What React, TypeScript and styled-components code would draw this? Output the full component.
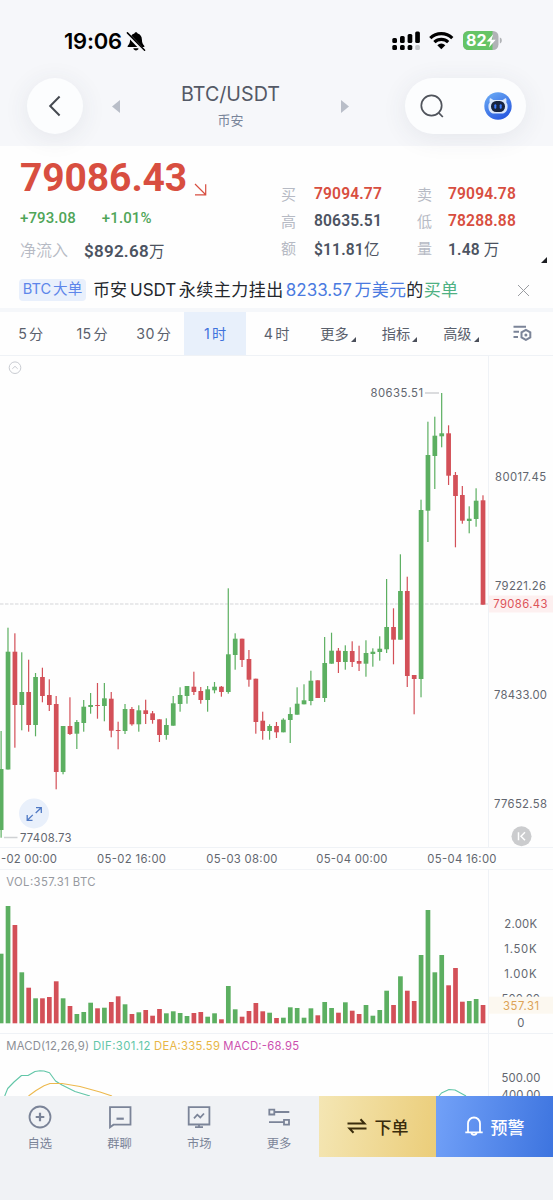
import React from "react";
import styled, { createGlobalStyle } from "styled-components";

const Global = createGlobalStyle`
  *, *::before, *::after { box-sizing: border-box; }
  body { margin: 0; background: #fff; font-family: Inter, "Noto Sans CJK SC", sans-serif; }
  svg { display: block; }
`;

const GREEN = "#5caf61";
const RED = "#d35058";
const LINE = "#eff2f6";

const Screen = styled.div`
  width: 553px;
  height: 1200px;
  overflow: hidden;
  display: flex;
  flex-direction: column;
  background: #fefefe;
`;

const Top = styled.div`
  height: 146px;
  flex: none;
  background: #f6f7fa;
`;

const StatusBar = styled.div`
  height: 78px;
  padding: 30px 51px 0 64px;
  display: flex;
  justify-content: space-between;
  align-items: flex-start;
`;

const Clock = styled.div`
  display: flex;
  gap: 4px;
  font-size: 22px;
  line-height: 22px;
  font-weight: 600;
  letter-spacing: -0.25px;
  color: #000;
`;

const Header = styled.div`
  height: 56px;
  padding: 0 27px;
  display: flex;
  align-items: center;
`;

const Round = styled.div<{ $w: number }>`
  width: ${(p) => p.$w}px;
  height: 56px;
  flex: none;
  border-radius: 28px;
  background: #fcfdfe;
  box-shadow: 0 4px 26px rgba(60, 70, 90, 0.09);
  display: flex;
  align-items: center;
  justify-content: ${(p) => (p.$w > 56 ? "space-between" : "center")};
  padding: ${(p) => (p.$w > 56 ? "0 14px 0 15px" : "0")};
`;

const Pair = styled.div`
  flex: 1;
  padding: 0 56px 0 29px;
  display: flex;
  align-items: center;
  justify-content: space-between;
`;

const PairName = styled.div`
  display: flex;
  flex-direction: column;
  align-items: center;
  font-size: 19.7px;
  line-height: 24px;
  color: #545966;
  small {
    font-size: 13px;
    line-height: 20px;
    margin-top: 4px;
    color: #79859a;
  }
`;

const Quote = styled.div`
  height: 128px;
  flex: none;
  padding: 0 6px 0 20px;
  display: flex;
  font-family: Roboto, "Noto Sans CJK SC", sans-serif;
`;

const QuoteMain = styled.div`
  width: 261px;
  flex: none;
`;

const Price = styled.div`
  display: flex;
  gap: 7px;
  padding-top: 13px;
  height: 60px;
  font-size: 39px;
  line-height: 39px;
  font-weight: 700;
  letter-spacing: -0.1px;
  color: #d84e40;
  svg { margin-top: 24px; }
`;

const Change = styled.div`
  display: flex;
  gap: 26px;
  height: 24px;
  line-height: 24px;
  font-size: 15px;
  color: #4fa558;
  b { font-weight: 500; letter-spacing: 0.1px; }
`;

const Inflow = styled.div`
  display: flex;
  gap: 16px;
  height: 40px;
  line-height: 40px;
  font-size: 17px;
  font-weight: 600;
  letter-spacing: 0.25px;
  padding-top: 1px;
  color: #4c5361;
  span { font-size: 16px; font-weight: 350; letter-spacing: 0; color: #b6bac4; }
`;

const Cjk = styled.i`
  font-style: normal;
  font-weight: 400;
  font-size: 15.5px;
`;

const Stats = styled.div`
  width: 236px;
  padding-top: 34px;
  display: grid;
  grid-template-columns: 33px 103px 31px 1fr;
  grid-auto-rows: 27px;
  align-items: center;
`;

const StatLabel = styled.span`
  font-size: 15px;
  color: #b6bac4;
`;

const StatValue = styled.span<{ $red?: boolean }>`
  font-size: 15.6px;
  font-weight: 600;
  letter-spacing: 0.15px;
  white-space: nowrap;
  color: ${(p) => (p.$red ? "#d84e40" : "#4c5361")};
`;

const Corner = styled.div`
  flex: 1;
  display: flex;
  align-items: flex-end;
  justify-content: flex-end;
  padding-bottom: 11px;
`;

const Notice = styled.div`
  height: 34px;
  flex: none;
  padding: 0 23px 2px 19px;
  display: flex;
  align-items: center;
`;

const Tag = styled.div`
  width: 67px;
  height: 22px;
  border-radius: 4px;
  background: #e9f0fc;
  color: #5d86ea;
  font-size: 14.6px;
  line-height: 21px;
  display: flex;
  justify-content: center;
  gap: 2px;
`;

const NoticeText = styled.div`
  flex: 1;
  margin-left: 7px;
  display: flex;
  font-size: 17px;
  line-height: 22px;
  color: #24272d;
  white-space: nowrap;
`;

const Piece = styled.span<{ $ml?: number; $c?: string; $ls?: number }>`
  margin-left: ${(p) => p.$ml ?? 0}px;
  color: ${(p) => p.$c ?? "inherit"};
  letter-spacing: ${(p) => p.$ls ?? 0}px;
`;

const Divider = styled.div`
  height: 4px;
  flex: none;
  background: #f5f7fa;
`;

const Tabs = styled.div`
  height: 43px;
  flex: none;
  display: grid;
  grid-template-columns: repeat(9, 1fr);
`;

const Tab = styled.div<{ $on?: boolean }>`
  display: flex;
  align-items: center;
  justify-content: center;
  gap: 2px;
  padding-bottom: 1px;
  font-size: 14.2px;
  color: ${(p) => (p.$on ? "#3f72dc" : "#5a606c")};
  background: ${(p) => (p.$on ? "#e8f0fb" : "transparent")};
  span { letter-spacing: 0.3px; }
  svg.more { margin-top: 12px; }
`;

const Plot = styled.svg`
  flex: none;
  font-family: Inter, sans-serif;
`;

const Bottom = styled.div`
  height: 104px;
  flex: none;
  background: #f0f2f5;
  display: flex;
  align-items: flex-start;
`;

const NavItem = styled.div`
  width: 79.75px;
  height: 61px;
  display: flex;
  flex-direction: column;
  align-items: center;
  padding-top: 9px;
  font-size: 12.3px;
  line-height: 18px;
  color: #7b8498;
  svg { margin-bottom: 6px; }
`;

const Action = styled.div<{ $blue?: boolean }>`
  width: 117px;
  height: 61px;
  display: flex;
  align-items: center;
  justify-content: center;
  padding-bottom: 1px;
  gap: 8px;
  font-size: 17px;
  font-weight: 500;
  color: ${(p) => (p.$blue ? "#fff" : "#3a2c0c")};
  background: ${(p) =>
    p.$blue
      ? "linear-gradient(100deg, #72a1f8, #3d74df)"
      : "linear-gradient(100deg, #f4e6b4, #ebcd79)"};
`;

/* up/down, high, body top, body bottom, low, volume top */
type Bar = [0 | 1, number, number, number, number, number];
const bars: Bar[] = [
  [1, 731, 769, 830, 837.7, 953.7], [1, 627.7, 651.7, 769.5, 769.5, 906],
  [0, 633.3, 651.7, 705, 747.7, 925], [1, 652.3, 692, 705, 730.3, 972.3],
  [0, 659.7, 692, 725, 731.7, 987.7], [1, 673, 677, 725, 736.3, 998.3],
  [0, 667.7, 677, 696, 702.3, 998.3], [0, 679.3, 695, 705, 711, 997],
  [0, 696, 704, 772, 789.3, 981.3], [1, 726, 726, 772, 774.3, 998.3],
  [0, 697.3, 726, 734, 735, 1006], [1, 720, 722, 733.7, 749, 1014],
  [1, 700, 706.7, 723, 731.7, 1012], [1, 693, 705, 707, 713.7, 1002.7],
  [0, 683, 705, 706, 718.7, 1008.3], [1, 683, 698.3, 706, 721.3, 1007.7],
  [0, 692, 698.7, 730.7, 737.3, 1002], [0, 721.7, 730, 731, 749.3, 996.3],
  [1, 704, 709, 731, 734, 1004.3], [0, 707, 709, 724.3, 725.7, 1014],
  [1, 705.3, 710.3, 724.3, 731.7, 1012.3], [0, 699.7, 710.3, 714, 724, 1010],
  [0, 711, 713.3, 720, 723.7, 1015.7], [0, 719.3, 719.3, 735, 742, 1009],
  [1, 718.3, 725, 735, 739.7, 1013.3], [1, 696, 703.3, 725.7, 725.7, 1011.3],
  [1, 687.3, 695, 704, 711.7, 1013], [1, 686, 686, 696, 703.7, 1016],
  [0, 671.7, 686.7, 692, 695, 1013], [0, 687, 691, 700, 703.7, 1012],
  [1, 686, 689.3, 700, 711.7, 1016.7], [1, 682, 686.7, 690.3, 693.3, 1013.3],
  [0, 686, 686.7, 692, 696.7, 1019.3], [1, 588.3, 654.3, 692, 693.7, 986],
  [1, 633.3, 638.7, 655, 669.7, 1009.3], [0, 638.7, 638.7, 660, 667, 1016.7],
  [0, 650, 659, 679.7, 686.7, 1011], [0, 678.7, 678.7, 722, 733.7, 1003],
  [0, 711.7, 720.7, 731, 739.7, 1011.3], [1, 724.3, 726, 731, 739.7, 1012.7],
  [0, 722, 726, 732.3, 738, 1018], [1, 718.3, 719.7, 732.3, 732.3, 1017.7],
  [1, 707.3, 714, 720, 743, 1007.3], [1, 687.3, 703.7, 714.7, 714.7, 1008],
  [1, 684.3, 700.3, 704.3, 704.3, 1017.7], [1, 670.7, 680.7, 701, 705.3, 1008.3],
  [0, 680.3, 680.3, 698, 698, 1015.3], [1, 637, 663, 698, 702, 1002],
  [1, 632.7, 650.7, 663.7, 663.7, 1008], [0, 648, 650.7, 662, 673, 1012.7],
  [1, 645.3, 651, 662, 669.7, 1002.3], [0, 641.3, 651, 662, 667, 1010.7],
  [0, 645.7, 661, 663.7, 671, 1014], [1, 640.3, 653, 663.7, 676.7, 1005],
  [1, 648.3, 651.7, 654, 666.7, 1015.7], [1, 636.3, 648.7, 652, 660.7, 1010],
  [1, 579, 627, 649.3, 653, 990.7], [0, 608.3, 627, 639.7, 664.3, 1005],
  [1, 554.3, 591, 639.7, 639.7, 976.3], [0, 576.7, 591, 676, 687, 990.7],
  [0, 675, 675, 679, 714.3, 1001], [1, 499.7, 510, 679, 697.3, 955],
  [1, 421.7, 455, 510.7, 542, 910], [1, 416.7, 435.7, 456, 489, 972.3],
  [1, 393, 433.3, 436.3, 447.3, 955], [0, 425.3, 433.3, 475.7, 485, 985.3],
  [0, 472, 475, 496, 547.3, 968], [0, 486, 495, 520.7, 523.7, 1001.7],
  [1, 506.3, 518.7, 521, 533.3, 1001], [1, 488.3, 500.7, 519, 526.7, 999],
  [0, 495.3, 500.3, 604.7, 604.7, 1005],
];
const barX = (i: number) => 1.1 + i * 6.884;

/* A chart label whose glyphs are spread to span x1..x2. */
function Label({ x1, x2, y, c = "#62666f", s = 11.3, children }: {
  x1: number; x2: number; y: number; c?: string; s?: number; children: string;
}) {
  return (
    <text x={x1} y={y} fill={c} fontSize={s} textLength={x2 - x1}>
      {children}
    </text>
  );
}

const Tri = ({ s = 5, c = "#4a4f5a" }: { s?: number; c?: string }) => (
  <svg className="more" width={s} height={s} viewBox="0 0 5 5">
    <path d="M5 0V5H0Z" fill={c} />
  </svg>
);

function Status() {
  return (
    <StatusBar>
      <Clock>
        19:06
        <svg width="20" height="22" viewBox="0 0 20 22">
          <path d="M10 2.2c.9 0 1.5.6 1.6 1.4 2.8.7 4.2 3 4.3 5.9.1 3.3.8 4.7 2.3 6.2.5.6.2 1.4-.6 1.4H2.4c-.8 0-1.1-.8-.6-1.4 1.500-1.500 2.200-2.900 2.300-6.200.1-2.900 1.500-5.200 4.300-5.900.1-.8.7-1.400 1.600-1.400z" fill="#000" />
          <path d="M7.300 18.300h5.400c-.3 1.300-1.400 2.200-2.700 2.200s-2.400-.9-2.700-2.200z" fill="#000" />
          <path d="M1 3.800 17.400 20.800" stroke="#f6f7fa" strokeWidth="3.600" />
          <path d="M1.400 2.900 18.600 20.200" stroke="#000" strokeWidth="1.500" strokeLinecap="round" />
        </svg>
      </Clock>
      <svg width="111" height="22" viewBox="391 30 111 22">
        {[[392.3, 38], [400, 36], [407.6, 34], [415.2, 31.5]].map(([x, y], i) => (
          <g key={x}>
            <rect x={x} y={y} width="4.700" height={43 - y} rx="1.500" />
            <rect x={x} y="45" width="4.700" height="5" rx="1.500" fill={i === 3 ? "#c4c6c9" : "#000"} />
          </g>
        ))}
        <g fill="none" stroke="#000" strokeWidth="3.200">
          <path d="M430.300 38.200a15.700 15.700 0 0 1 22 0" />
          <path d="M434.400 42.200a10 10 0 0 1 13.800 0" />
        </g>
        <path d="M441.300 49.200 437.300 45.200a5.700 5.700 0 0 1 8 0z" />
        <clipPath id="cell"><rect x="463" y="31" width="35.500" height="19" rx="5.500" /></clipPath>
        <g clipPath="url(#cell)">
          <rect x="463" y="31" width="36" height="19" fill="#b1b3b6" />
          <rect x="463" y="31" width="29.500" height="19" fill="#66c466" />
        </g>
        <path d="M499.800 37.500c1.500.4 2 1.600 2 3s-.5 2.600-2 3z" fill="#b1b3b6" />
        <text x="466" y="46.300" fontSize="16" fontWeight="700" fill="#fff" fontFamily="Inter" textLength="20.500" lengthAdjust="spacingAndGlyphs">82</text>
        <path d="M493.200 34.200 486.600 41.600h4l-1.700 5.800 6.800-7.700h-4.100z" fill="#fff" />
      </svg>
    </StatusBar>
  );
}

function Head() {
  return (
    <Header>
      <Round $w={56}>
        <svg width="14" height="22" viewBox="0 0 14 22" fill="none" stroke="#454950" strokeWidth="2">
          <path d="M11.600 1.500 2.200 11l9.400 9.500" />
        </svg>
      </Round>
      <Pair>
        <svg width="8" height="13" viewBox="0 0 8 13"><path d="M8 0v13L0 6.500z" fill="#b9bec8" /></svg>
        <PairName>
          BTC/USDT<small>币安</small>
        </PairName>
        <svg width="8" height="13" viewBox="0 0 8 13"><path d="M0 0v13l8-6.500z" fill="#b9bec8" /></svg>
      </Pair>
      <Round $w={121}>
        <svg width="24" height="24" viewBox="0 0 24 24" fill="none" stroke="#50545c" strokeWidth="1.700">
          <circle cx="11.500" cy="11.500" r="10.200" />
          <path d="m18.800 18.800 4 4.200" />
        </svg>
        <svg width="28" height="28" viewBox="0 0 28 28">
          <defs>
            <linearGradient id="bot" x1="0" y1="0" x2=".6" y2="1">
              <stop offset="0" stopColor="#6fb0f6" />
              <stop offset="1" stopColor="#2a5be0" />
            </linearGradient>
          </defs>
          <circle cx="14" cy="14" r="13.700" fill="url(#bot)" />
          <path d="M5.600 7.200c0-1 .8-1.200 1.500-.7l2.200 1.400h9.400l2.200-1.400c.7-.5 1.500-.3 1.500.7v3.500c.9 1 1.200 2.100 1.200 3.700 0 4.600-2.500 7-6 7.200h-7.200c-3.500-.2-6-2.600-6-7.200 0-1.600.3-2.700 1.200-3.700z" fill="#dce8fa" />
          <rect x="7" y="9" width="14" height="11" rx="5.200" fill="#18243f" />
          <rect x="10.300" y="12.200" width="2" height="4.600" rx="1" fill="#3d7cff" />
          <rect x="15.700" y="12.200" width="2" height="4.600" rx="1" fill="#3d7cff" />
        </svg>
      </Round>
    </Header>
  );
}

function PricePane() {
  return (
    <Plot width="553" height="493" viewBox="0 355 553 493">
      <path d="M0 355.500H553M0 847.500H553M488.500 355V848" stroke={LINE} />
      <g fill="none" stroke="#c9ccd2">
        <circle cx="15" cy="367.700" r="5.800" />
        <path d="m12.300 368.800 2.700-2.500 2.700 2.500" />
      </g>
      <path d="M0 604H488" stroke="#d4d5d8" strokeDasharray="3.500 1.500" />
      {bars.map(([up, hi, top, bot, lo], i) => (
        <g key={i} fill={up ? GREEN : RED}>
          <rect x={barX(i) - 0.6} y={hi} width="1.200" height={lo - hi} />
          <rect x={barX(i) - 2.3} y={top} width="4.700" height={Math.max(bot - top, 1)} />
        </g>
      ))}
      <path d="M425 393H439M4 837.500H17.500" stroke="#cfd1d4" strokeWidth="1.500" />
      <Label x1={370.5} x2={423} y={397.2}>80635.51</Label>
      <Label x1={20} x2={71.5} y={842}>77408.73</Label>
      <Label x1={495} x2={546} y={481.3}>80017.45</Label>
      <Label x1={495} x2={546} y={590.2}>79221.26</Label>
      <Label x1={494} x2={547} y={699}>78433.00</Label>
      <Label x1={494} x2={547} y={808}>77652.58</Label>
      <rect x="489" y="595.500" width="64" height="17" fill="#fdf0f0" />
      <Label x1={493.3} x2={547.5} y={608.3} c="#dc5358">79086.43</Label>
      <circle cx="34" cy="813.500" r="15" fill="#e9f0fb" />
      <g fill="none" stroke="#5079c4" strokeWidth="1.300">
        <path d="M36 807.600h5.300v5.300M41.200 807.700l-5.500 5.300M27.200 815v5.300h5.300M27.300 820.200l5.500-5.300" />
      </g>
      <circle cx="521.500" cy="836.200" r="10" fill="#cbccce" />
      <path d="M518.500 832.200v8M525 832.200l-4 4 4 4" fill="none" stroke="#fff" strokeWidth="1.500" />
    </Plot>
  );
}

function TimeAxis() {
  return (
    <Plot width="553" height="21" viewBox="0 848 553 21">
      <Label x1={1} x2={57} y={863.2}>-02 00:00</Label>
      <Label x1={97} x2={166} y={863.2}>05-02 16:00</Label>
      <Label x1={206.3} x2={277.5} y={863.2}>05-03 08:00</Label>
      <Label x1={316.3} x2={387.5} y={863.2}>05-04 00:00</Label>
      <Label x1={427.3} x2={496.5} y={863.2}>05-04 16:00</Label>
    </Plot>
  );
}

function VolumePane() {
  return (
    <Plot width="553" height="164" viewBox="0 869 553 164">
      <path d="M0 869.300H553M488.500 869V1033" stroke={LINE} />
      <Label x1={6.3} x2={95.5} y={886.3} c="#979aa1">VOL:357.31 BTC</Label>
      {bars.map(([up, , , , , v], i) => (
        <rect key={i} x={barX(i) - 2.3} y={v} width="4.700" height={1023.3 - v} fill={up ? GREEN : RED} />
      ))}
      <Label x1={504.3} x2={537} y={928.3}>2.00K</Label>
      <Label x1={504.3} x2={536.5} y={953.2}>1.50K</Label>
      <Label x1={504.3} x2={536.5} y={978}>1.00K</Label>
      <Label x1={501.5} x2={540} y={1002.8}>500.00</Label>
      <rect x="489" y="996.700" width="64" height="17" fill="#fcf8f0" />
      <Label x1={503} x2={539} y={1009.8} c="#dda356">357.31</Label>
      <Label x1={517.3} x2={524.5} y={1027.3}>0</Label>
    </Plot>
  );
}

function MacdPane() {
  return (
    <Plot width="553" height="63" viewBox="0 1033 553 63">
      <path d="M0 1033.500H553M488.500 1033V1096" stroke={LINE} />
      <Label x1={6.3} x2={89} y={1050.2} c="#8c8f96">MACD(12,26,9)</Label>
      <Label x1={93} x2={150.5} y={1050.2} c="#62c6a8">DIF:301.12</Label>
      <Label x1={154} x2={220} y={1050.2} c="#e8b645">DEA:335.59</Label>
      <Label x1={223.3} x2={299} y={1050.2} c="#cc4fae">MACD:-68.95</Label>
      <g fill="none" strokeWidth="1.100" strokeLinejoin="round">
        <path d="M4.700 1096 7.700 1088.500 14 1082 21.500 1075.500H28L35 1071.500 40 1070.700 44 1071 49.500 1072.700 55.500 1081 62 1085 75 1091.500 90 1096M439 1096 441.500 1093 449 1089.500 455 1090 466 1096" stroke="#62c6a8" />
        <path d="M28.500 1096 36 1090.500 44 1085.800 50 1083.500H62L80 1086.500 100 1092 112 1096" stroke="#edb94e" />
      </g>
      <Label x1={501.5} x2={540.5} y={1082}>500.00</Label>
      <Label x1={501.5} x2={540.5} y={1099}>400.00</Label>
    </Plot>
  );
}

function NavBar() {
  return (
    <Bottom>
      <NavItem>
        <svg width="24" height="24" viewBox="0 0 24 24" fill="none" stroke="#7b8498" strokeWidth="1.800">
          <circle cx="12" cy="12" r="10.500" />
          <path d="M12 7.700v8.600M7.700 12h8.600" strokeWidth="2.200" />
        </svg>
        自选
      </NavItem>
      <NavItem>
        <svg width="24" height="24" viewBox="0 0 24 24" fill="none" stroke="#7b8498" strokeWidth="1.800">
          <path d="M2 2.200h20.500v17.500H5.500L2 22.300z" />
          <path d="M8.500 13.700h7.300" strokeWidth="2.200" />
        </svg>
        群聊
      </NavItem>
      <NavItem>
        <svg width="24" height="24" viewBox="0 0 24 24" fill="none" stroke="#7b8498" strokeWidth="1.800">
          <path d="M1.700 2.200h20.700v17.300H1.700zM12 19.500v3M8 22.200h8" />
          <path d="m7 13.300 3.300-3.600 3 2.800 3.700-4" />
        </svg>
        市场
      </NavItem>
      <NavItem>
        <svg width="24" height="24" viewBox="0 0 24 24" fill="none" stroke="#7b8498" strokeWidth="1.800">
          <path d="M2.300 4.700h5v4.800h-5zM7.300 7h15M17 14.800h5v4.800h-5zM2 17.200h15" />
        </svg>
        更多
      </NavItem>
      <Action>
        <svg width="20" height="16" viewBox="0 0 20 16" fill="none" stroke="#3a2c0c" strokeWidth="2">
          <path d="M.500 5.500H17.500L13.500 1.300M19.500 10.500H2.500l4 4.200" />
        </svg>
        下单
      </Action>
      <Action $blue>
        <svg width="18" height="20" viewBox="0 0 18 20" fill="none" stroke="#fff" strokeWidth="1.800">
          <path d="M.300 16.300h17.400M3 16.300V7.500a6 6 0 0 1 12 0v8.800M6.200 16.400c.3 1.500 1.400 2.500 2.800 2.500s2.500-1 2.800-2.500" />
        </svg>
        预警
      </Action>
    </Bottom>
  );
}

export default function App() {
  return (
    <Screen>
      <Global />
      <Top>
        <Status />
        <Head />
      </Top>
      <Quote>
        <QuoteMain>
          <Price>
            79086.43
            <svg width="13" height="13" viewBox="0 0 13 13" fill="none" stroke="#d84e40" strokeWidth="1.200">
              <path d="m1 1 10.500 10.500M11.700 1.300v10.500H1" />
            </svg>
          </Price>
          <Change><b>+793.08</b><b>+1.01%</b></Change>
          <Inflow><span>净流入</span><div>$892.68<Cjk>万</Cjk></div></Inflow>
        </QuoteMain>
        <Stats>
          <StatLabel>买</StatLabel><StatValue $red>79094.77</StatValue>
          <StatLabel>卖</StatLabel><StatValue $red>79094.78</StatValue>
          <StatLabel>高</StatLabel><StatValue>80635.51</StatValue>
          <StatLabel>低</StatLabel><StatValue $red>78288.88</StatValue>
          <StatLabel>额</StatLabel><StatValue>$11.81<Cjk>亿</Cjk></StatValue>
          <StatLabel>量</StatLabel><StatValue>1.48 <Cjk>万</Cjk></StatValue>
        </Stats>
        <Corner><Tri s={6} c="#1c1e22" /></Corner>
      </Quote>
      <Notice>
        <Tag><span>BTC</span><span>大单</span></Tag>
        <NoticeText>
          <Piece>币安</Piece>
          <Piece $ml={3}>USDT</Piece>
          <Piece $ml={2.5} $ls={0.5}>永续主力挂出</Piece>
          <Piece $ml={2} $c="#4a7ae0">8233.57</Piece>
          <Piece $ml={2.5} $c="#4a7ae0" $ls={0.3}>万美元</Piece>
          <Piece $ls={0.3}>的</Piece>
          <Piece $c="#4fb183" $ls={0.3}>买单</Piece>
        </NoticeText>
        <svg width="13" height="13" viewBox="0 0 13 13" stroke="#9a9ca1"><path d="m1 1 11 11M12 1 1 12" /></svg>
      </Notice>
      <Divider />
      <Tabs>
        <Tab><span>5</span>分</Tab>
        <Tab><span>15</span>分</Tab>
        <Tab><span>30</span>分</Tab>
        <Tab $on><span>1</span>时</Tab>
        <Tab><span>4</span>时</Tab>
        <Tab>更多<Tri /></Tab>
        <Tab>指标<Tri /></Tab>
        <Tab>高级<Tri /></Tab>
        <Tab>
          <svg width="19" height="16" viewBox="0 0 19 16" fill="none" stroke="#7b8498" strokeWidth="2">
            <path d="M.500 1.800H13M.500 6.800H6M.500 12H5" />
            <path d="M12.900 4.900 17.300 7.400v5L12.900 14.900 8.500 12.400v-5z" />
            <circle cx="12.900" cy="9.900" r="1.500" fill="#7b8498" stroke="none" />
          </svg>
        </Tab>
      </Tabs>
      <PricePane />
      <TimeAxis />
      <VolumePane />
      <MacdPane />
      <NavBar />
    </Screen>
  );
}
